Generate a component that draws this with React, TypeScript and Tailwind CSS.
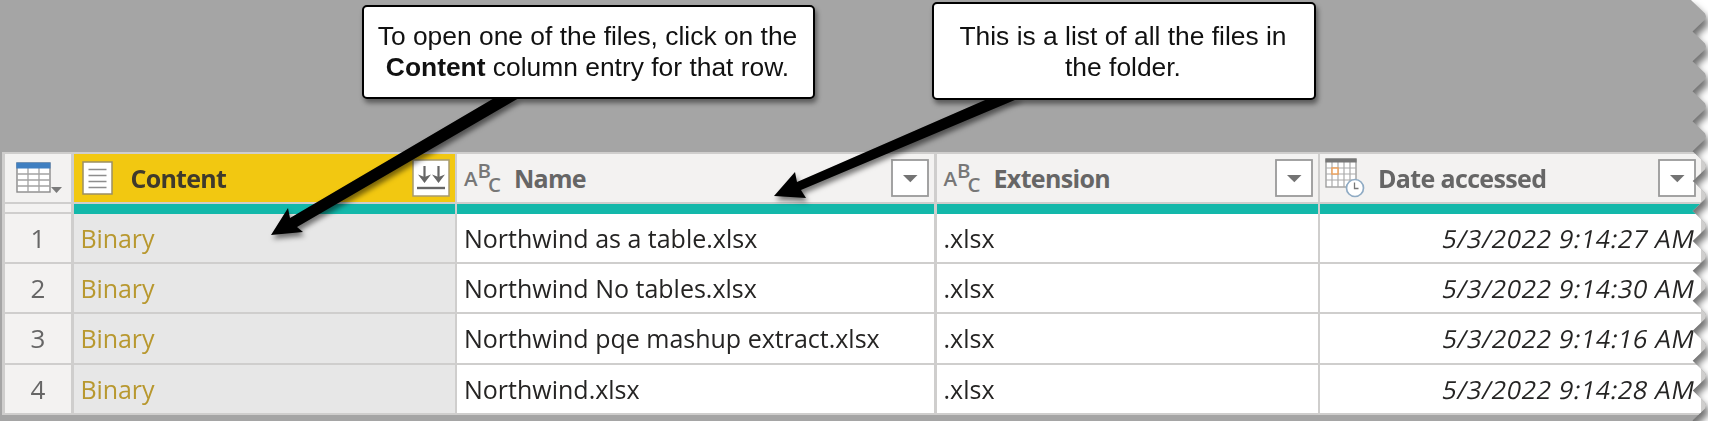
import React from "react";

const files = [
  { name: "Northwind as a table.xlsx", date: "5/3/2022 9:14:27 AM", height: "h-[48px]" },
  { name: "Northwind No tables.xlsx", date: "5/3/2022 9:14:30 AM", height: "h-[48px]" },
  { name: "Northwind pqe mashup extract.xlsx", date: "5/3/2022 9:14:16 AM", height: "h-[49px]" },
  { name: "Northwind.xlsx", date: "5/3/2022 9:14:28 AM", height: "h-[48px]" },
];

const grid = "grid grid-cols-[66px_381px_477px_381px_381px] gap-x-[2.5px]";

// Torn right edge: points alternate between an outer peak and an inner notch.
const tornEdge = Array.from({ length: 15 }, (_, i) => {
  const y = 1.5 + i * 29.93;
  return `1692.5px ${y}px, 1705px ${y + 12}px, 1706px ${y + 15}px, 1705px ${y + 18}px`;
}).join(", ");
const tornClip = `polygon(0 0, 1691px 0, ${tornEdge}, 1692px 460px, 0 460px)`;

function TableIcon() {
  return (
    <svg width="46" height="32" viewBox="0 0 46 32">
      <rect x="1" y="1" width="33" height="29" fill="#fff" stroke="#8a8a8a" strokeWidth="1.4" />
      <path d="M12 6V30M23 6V30M1 12H34M1 18H34M1 24H34" stroke="#a3a3a3" strokeWidth="1.3" />
      <rect x="0.3" y="0.5" width="34.2" height="6" fill="#3f7fc1" />
      <path d="M35 25H46L40.5 31Z" fill="#7b7b7b" />
    </svg>
  );
}

function DocIcon() {
  return (
    <svg width="31" height="34" viewBox="0 0 31 34">
      <rect x="1" y="1" width="29" height="32" fill="#fff" stroke="#9b8e64" strokeWidth="1.5" />
      <path d="M6.500 8.500H24.500M6.500 14.500H24.500M6.500 20.500H24.500M6.500 26.500H24.500" stroke="#8d8d8d" strokeWidth="1.5" />
    </svg>
  );
}

function ExpandButton() {
  return (
    <svg width="38" height="38" viewBox="0 0 38 38">
      <rect x="1" y="1" width="36" height="36" fill="#fff" stroke="#a79a70" strokeWidth="1.5" />
      <path d="M12.500 7V19M26.500 7V19" stroke="#666" strokeWidth="2.2" />
      <path d="M6 15.500L12.500 18L19 15.500L12.500 24ZM20 15.500L26.500 18L33 15.500L26.500 24Z" fill="#666" />
      <path d="M5 29H33" stroke="#666" strokeWidth="2.400" />
    </svg>
  );
}

function DropButton() {
  return (
    <svg width="38" height="38" viewBox="0 0 38 38">
      <rect x="1" y="1" width="36" height="36" fill="#fff" stroke="#9a9a9a" strokeWidth="1.8" />
      <path d="M12 16H26.500L19.300 23.200Z" fill="#737373" />
    </svg>
  );
}

function AbcIcon() {
  return (
    <div className="flex h-[38px] w-[36px] text-[20.500px] font-semibold leading-[20px] text-[#777]">
      <span className="pt-[9px]">A</span>
      <span className="pt-px">B</span>
      <span className="-ml-[3px] pt-[15px]">C</span>
    </div>
  );
}

function CalendarIcon() {
  return (
    <svg width="40" height="40" viewBox="0 0 40 40">
      <rect x="1" y="1" width="30" height="28" fill="#fff" stroke="#999" strokeWidth="1.300" />
      <path d="M7 4V29M13 4V29M19 4V29M25 4V29M1 10H31M1 16H31M1 22H31" stroke="#aaa" strokeWidth="1.200" />
      <rect x="0.400" y="0.500" width="31.200" height="4" fill="#777" />
      <rect x="7" y="10" width="6" height="6" fill="#fff" stroke="#eda35e" strokeWidth="1.500" />
      <circle cx="30" cy="30" r="8.500" fill="#fff" stroke="#8fabc4" strokeWidth="1.700" />
      <path d="M29.500 24.500V30.500H33.500" fill="none" stroke="#777" strokeWidth="1.300" />
    </svg>
  );
}

export default function App() {
  return (
    <div className="h-[421px] w-[1713px] overflow-hidden bg-white">
      <div className="h-[421px] w-[1708px] overflow-hidden">
        <div className="[filter:drop-shadow(3px_6px_3.5px_rgba(0,0,0,0.55))]">
          <div
            className="relative h-[460px] w-[1713px] bg-[#a5a5a5] pt-[152px] font-['Open_Sans',sans-serif]"
            style={{ clipPath: tornClip }}
          >
            <div className="ml-[2px] flex w-[1711px] flex-col gap-[2px] bg-[#cfcecd] py-[2px] pl-[3px]">
              <div className={`${grid} h-[48px] text-[25px] font-bold text-[#666]`}>
                <div className="flex items-center bg-[#f3f2f1] pl-[11px]"><TableIcon /></div>
                <div className="flex items-center bg-[#f2c811] pl-[8px] pr-[5px] text-[#3f3a2c]">
                  <DocIcon />
                  <span className="ml-[18px] flex-1 pt-[2px] tracking-[-0.75px]">Content</span>
                  <ExpandButton />
                </div>
                <div className="flex items-center bg-[#f3f2f1] pl-[7px] pr-[5px]">
                  <AbcIcon />
                  <span className="ml-[14px] flex-1 pt-[2px] tracking-[-0.75px]">Name</span>
                  <DropButton />
                </div>
                <div className="flex items-center bg-[#f3f2f1] pl-[7px] pr-[5px]">
                  <AbcIcon />
                  <span className="ml-[14px] flex-1 pt-[2px] tracking-[-0.65px]">Extension</span>
                  <DropButton />
                </div>
                <div className="flex items-center bg-[#f3f2f1] pl-[5px] pr-[5px]">
                  <CalendarIcon />
                  <span className="ml-[13px] flex-1 pt-[2px] tracking-[-0.65px]">Date accessed</span>
                  <DropButton />
                </div>
              </div>
              <div className="flex flex-col">
                <div className={`${grid} h-[10px]`}>
                  <div className="h-[8px] bg-[#f3f2f1]" />
                  <div className="bg-[#13b8aa]" />
                  <div className="bg-[#13b8aa]" />
                  <div className="bg-[#13b8aa]" />
                  <div className="bg-[#13b8aa]" />
                </div>
                <div className="flex flex-col gap-[2px]">
                  {files.map((f, i) => (
                    <div key={f.name} className={`${grid} ${f.height} text-[25px] leading-[49px] text-[#252423]`}>
                      <div className="overflow-hidden bg-[#f3f2f1] text-center text-[26px] text-[#666]">{i + 1}</div>
                      <div className="overflow-hidden bg-[#e7e7e7] pl-[7px] tracking-[-0.1px] text-[#b8982f]">Binary</div>
                      <div className="overflow-hidden bg-white pl-[7px]">{f.name}</div>
                      <div className="overflow-hidden bg-white pl-[7px]">.xlsx</div>
                      <div className="flex justify-end overflow-hidden bg-white pr-[6px]">
                        <span className="block -skew-x-[11deg] tracking-[0.65px]">{f.date}</span>
                      </div>
                    </div>
                  ))}
                </div>
              </div>
            </div>

            <svg className="absolute inset-0" width="1713" height="421" viewBox="0 0 1713 421">
              <defs>
                <filter id="soft" x="-10%" y="-10%" width="120%" height="130%">
                  <feDropShadow dx="2" dy="4" stdDeviation="2.500" floodColor="#000" floodOpacity="0.5" />
                </filter>
              </defs>
              <g filter="url(#soft)" fill="#000">
                <path d="M496 97L519 98L297 227L303 232L271 235L288 208L290 218Z" />
                <path d="M992 97L1022 97L801 190L806 198L774 196L795 172L797 182Z" />
              </g>
            </svg>
            <div className="absolute left-[362px] top-[5px] h-[94px] w-[453px] rounded-[5px] border-2 border-black bg-white pt-[14px] text-center font-['Liberation_Sans',sans-serif] text-[26.400px] leading-[31px] text-[#111] shadow-[2px_4px_5px_rgba(0,0,0,0.45)]">
              <div className="-ml-[2px]">
                To open one of the files, click on the<br /><b>Content</b> column entry for that row.
              </div>
            </div>
            <div className="absolute left-[932px] top-[2px] h-[98px] w-[384px] rounded-[5px] border-2 border-black bg-white pt-[17px] text-center font-['Liberation_Sans',sans-serif] text-[26.400px] leading-[31px] text-[#111] shadow-[2px_4px_5px_rgba(0,0,0,0.45)]">
              <div className="-ml-[2px]">
                This is a list of all the files in<br />the folder.
              </div>
            </div>
          </div>
        </div>
      </div>
    </div>
  );
}
